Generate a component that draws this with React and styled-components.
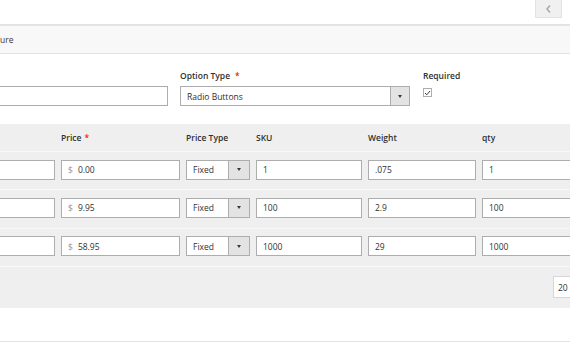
import React from 'react';
import styled, { createGlobalStyle } from 'styled-components';

const GlobalStyle = createGlobalStyle`
  html, body {
    margin: 0;
    padding: 0;
    background: #fff;
  }
  body {
    font-family: 'Open Sans', 'Liberation Sans', sans-serif;
    color: #303030;
    font-size: 8.5px;
  }
`;

const rows = [
  { price: '0.00', sku: '1', weight: '.075', qty: '1' },
  { price: '9.95', sku: '100', weight: '2.9', qty: '100' },
  { price: '58.95', sku: '1000', weight: '29', qty: '1000' },
];

const columns = '115px 119px 64px 106px 108px 110px';

const Page = styled.div`
  width: 570px;
  height: 350px;
  overflow: hidden;
`;

const TopBar = styled.div`
  height: 24px;
  display: flex;
  justify-content: flex-end;
  padding-right: 8px;
`;

const CollapseButton = styled.button`
  width: 27px;
  height: 18px;
  padding: 0;
  background: #f0f0f0;
  border: 1px solid #e3e3e3;
  border-top: none;
  display: flex;
  align-items: center;
  justify-content: center;
`;

const SectionHeader = styled.div`
  height: 27px;
  background: #f8f8f8;
  border-top: 2px solid #e3e3e3;
  border-bottom: 1px solid #e3e3e3;
  display: flex;
  align-items: center;
  font-size: 8.5px;
  color: #41362f;
`;

const OptionForm = styled.div`
  display: flex;
  margin-top: 16px;
  margin-left: -60px;
`;

const Field = styled.div`
  display: flex;
  flex-direction: column;
  width: ${p => p.$width}px;
  margin-right: ${p => p.$gap || 0}px;
`;

const Label = styled.label`
  font-weight: 600;
  font-size: 8.5px;
  line-height: 12px;
  height: 12px;
  margin-bottom: 4px;
  white-space: nowrap;
`;

const Star = styled.span`
  color: #e22626;
  margin-left: ${p => p.$gap ?? 5}px;
`;

const TextInput = styled.div`
  box-sizing: border-box;
  height: 20px;
  background: #fff;
  border: 1px solid #adadad;
  display: flex;
  align-items: center;
  padding-left: 6px;
  font-size: 8.5px;
  white-space: nowrap;
  overflow: hidden;
`;

const Currency = styled.span`
  color: #9a9a9a;
  margin-right: 5px;
  font-size: 8.5px;
`;

const Select = styled.div`
  box-sizing: border-box;
  height: 20px;
  background: #fff;
  border: 1px solid #adadad;
  display: flex;
  align-items: stretch;
  font-size: 8.5px;
`;

const SelectText = styled.span`
  flex: 1;
  display: flex;
  align-items: center;
  padding-left: 6px;
`;

const SelectArrow = styled.span`
  width: ${p => p.$width}px;
  background: #e3e3e3;
  border-left: 1px solid #adadad;
  display: flex;
  align-items: center;
  justify-content: center;
  &::after {
    content: '';
    border-left: 2.5px solid transparent;
    border-right: 2.5px solid transparent;
    border-top: 3px solid #41362f;
  }
`;

const Checkbox = styled.span`
  box-sizing: border-box;
  width: 9px;
  height: 9px;
  margin-top: 2px;
  border: 1px solid #adadad;
  background: #fff;
  display: flex;
  align-items: center;
  justify-content: center;
`;

const Table = styled.div`
  margin-top: 18px;
  background: #efefef;
`;

const GridRow = styled.div`
  display: grid;
  grid-template-columns: ${columns};
  column-gap: 6px;
  margin-left: -60px;
  height: ${p => p.$height}px;
  box-sizing: border-box;
  padding-top: ${p => p.$padTop || 0}px;
  align-content: ${p => (p.$padTop ? 'start' : 'center')};
  border-bottom: 1px solid #f8f8f8;
`;

const HeadCell = styled.div`
  font-weight: 600;
  font-size: 8.5px;
  line-height: 12px;
  white-space: nowrap;
`;

const TableFooter = styled.div`
  height: 41px;
  display: flex;
  justify-content: flex-end;
  align-items: center;
`;

const PageSize = styled.div`
  box-sizing: border-box;
  width: 30px;
  height: 22px;
  margin-right: -13px;
  background: #fff;
  border: 1px solid #d6d6d6;
  display: flex;
  align-items: center;
  padding-left: 4px;
  font-size: 8.5px;
`;

const BottomSpace = styled.div`
  height: 33px;
  border-bottom: 1px solid #e3e3e3;
`;

const ChevronLeft = () => (
  <svg width="7" height="10" viewBox="0 0 7 10">
    <path d="M5 1.5 L2 5 L5 8.5" fill="none" stroke="#a6a6a6" strokeWidth="1.4" />
  </svg>
);

const Tick = () => (
  <svg width="7" height="6" viewBox="0 0 7 6">
    <path d="M1 3 L2.8 4.8 L6 1" fill="none" stroke="#41362f" strokeWidth="1" />
  </svg>
);

export default function App() {
  return (
    <Page>
      <GlobalStyle />
      <TopBar>
        <CollapseButton>
          <ChevronLeft />
        </CollapseButton>
      </TopBar>

      <SectionHeader>ure</SectionHeader>

      <OptionForm>
        <Field $width={228} $gap={12}>
          <Label>&nbsp;</Label>
          <TextInput />
        </Field>
        <Field $width={230} $gap={13}>
          <Label>
            Option Type<Star>*</Star>
          </Label>
          <Select>
            <SelectText>Radio Buttons</SelectText>
            <SelectArrow $width={18} />
          </Select>
        </Field>
        <Field $width={60}>
          <Label>Required</Label>
          <Checkbox>
            <Tick />
          </Checkbox>
        </Field>
      </OptionForm>

      <Table>
        <GridRow $height={28}>
          <HeadCell />
          <HeadCell>
            Price<Star $gap={3}>*</Star>
          </HeadCell>
          <HeadCell>Price Type</HeadCell>
          <HeadCell>SKU</HeadCell>
          <HeadCell>Weight</HeadCell>
          <HeadCell>qty</HeadCell>
        </GridRow>
        {rows.map((row, i) => (
          <GridRow key={i} $height={38.3} $padTop={7.5}>
            <TextInput />
            <TextInput>
              <Currency>$</Currency>
              {row.price}
            </TextInput>
            <Select>
              <SelectText>Fixed</SelectText>
              <SelectArrow $width={20} />
            </Select>
            <TextInput>{row.sku}</TextInput>
            <TextInput>{row.weight}</TextInput>
            <TextInput>{row.qty}</TextInput>
          </GridRow>
        ))}
        <TableFooter>
          <PageSize>20</PageSize>
        </TableFooter>
      </Table>

      <BottomSpace />
    </Page>
  );
}
